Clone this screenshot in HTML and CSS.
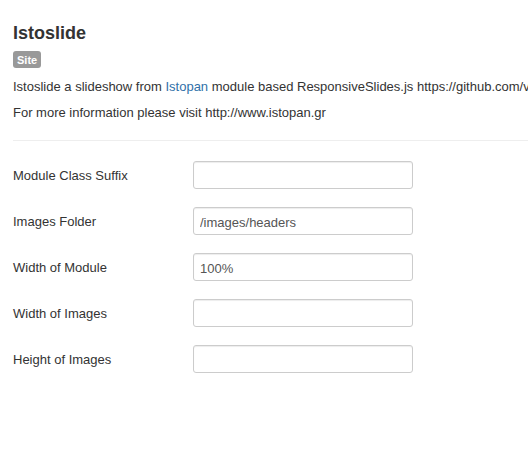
FILE: index.html
```html
<!DOCTYPE html>
<html>
<head>
<meta charset="utf-8">
<link rel="stylesheet" href="styles.css">
</head>
<body>
<div class="page">
  <h2 class="title">Istoslide</h2>
  <span class="badge">Site</span>
  <p class="desc">Istoslide a slideshow from <a href="#">Istopan</a> module based ResponsiveSlides.js https://github.com/viljamis/ResponsiveSlides.js</p>
  <p class="desc">For more information please visit http://www.istopan.gr</p>
  <hr class="sep">
  <div class="form">
    <div class="group"><label class="lbl">Module Class Suffix</label><input class="inp" type="text" value=""></div>
    <div class="group"><label class="lbl">Images Folder</label><input class="inp" type="text" value="/images/headers"></div>
    <div class="group"><label class="lbl">Width of Module</label><input class="inp" type="text" value="100%"></div>
    <div class="group"><label class="lbl">Width of Images</label><input class="inp" type="text" value=""></div>
    <div class="group"><label class="lbl">Height of Images</label><input class="inp" type="text" value=""></div>
  </div>
</div>
</body>
</html>
```

FILE: styles.css
```css
html, body {
  margin: 0;
  padding: 0;
  background: #fff;
  overflow: hidden;
}
body {
  font-family: "Liberation Sans", Arial, sans-serif;
  font-size: 13px;
  line-height: 18px;
  color: #333;
}
.page {
  padding: 20px 0 0 13px;
  white-space: nowrap;
}
.title {
  margin: 0 0 5px 0;
  font-size: 18px;
  font-weight: bold;
  line-height: 26px;
  color: #333;
}
.badge {
  display: inline-block;
  background: #999;
  color: #fff;
  font-size: 11px;
  font-weight: bold;
  line-height: 14px;
  padding: 2px 4px 1px;
  border-radius: 3px;
}
.desc {
  margin: 9px 0 0 0;
}
.desc + .desc {
  margin-top: 8px;
}
.desc a {
  color: #3071a9;
  text-decoration: none;
}
.sep {
  margin: 18px 0 0 0;
  border: 0;
  border-top: 1px solid #eee;
  border-bottom: 1px solid #fff;
  height: 0;
}
.form {
  padding-top: 19px;
}
.group {
  display: flex;
  align-items: center;
  margin-bottom: 18px;
}
.lbl {
  width: 180px;
  padding-top: 2px;
  color: #333;
}
.inp {
  box-sizing: border-box;
  width: 220px;
  height: 28px;
  padding: 5px 6px 3px;
  border: 1px solid #ccc;
  border-radius: 3px;
  font-family: "Liberation Sans", Arial, sans-serif;
  font-size: 13px;
  color: #555;
  box-shadow: inset 0 1px 1px rgba(0,0,0,0.075);
  margin: 0;
}
```
